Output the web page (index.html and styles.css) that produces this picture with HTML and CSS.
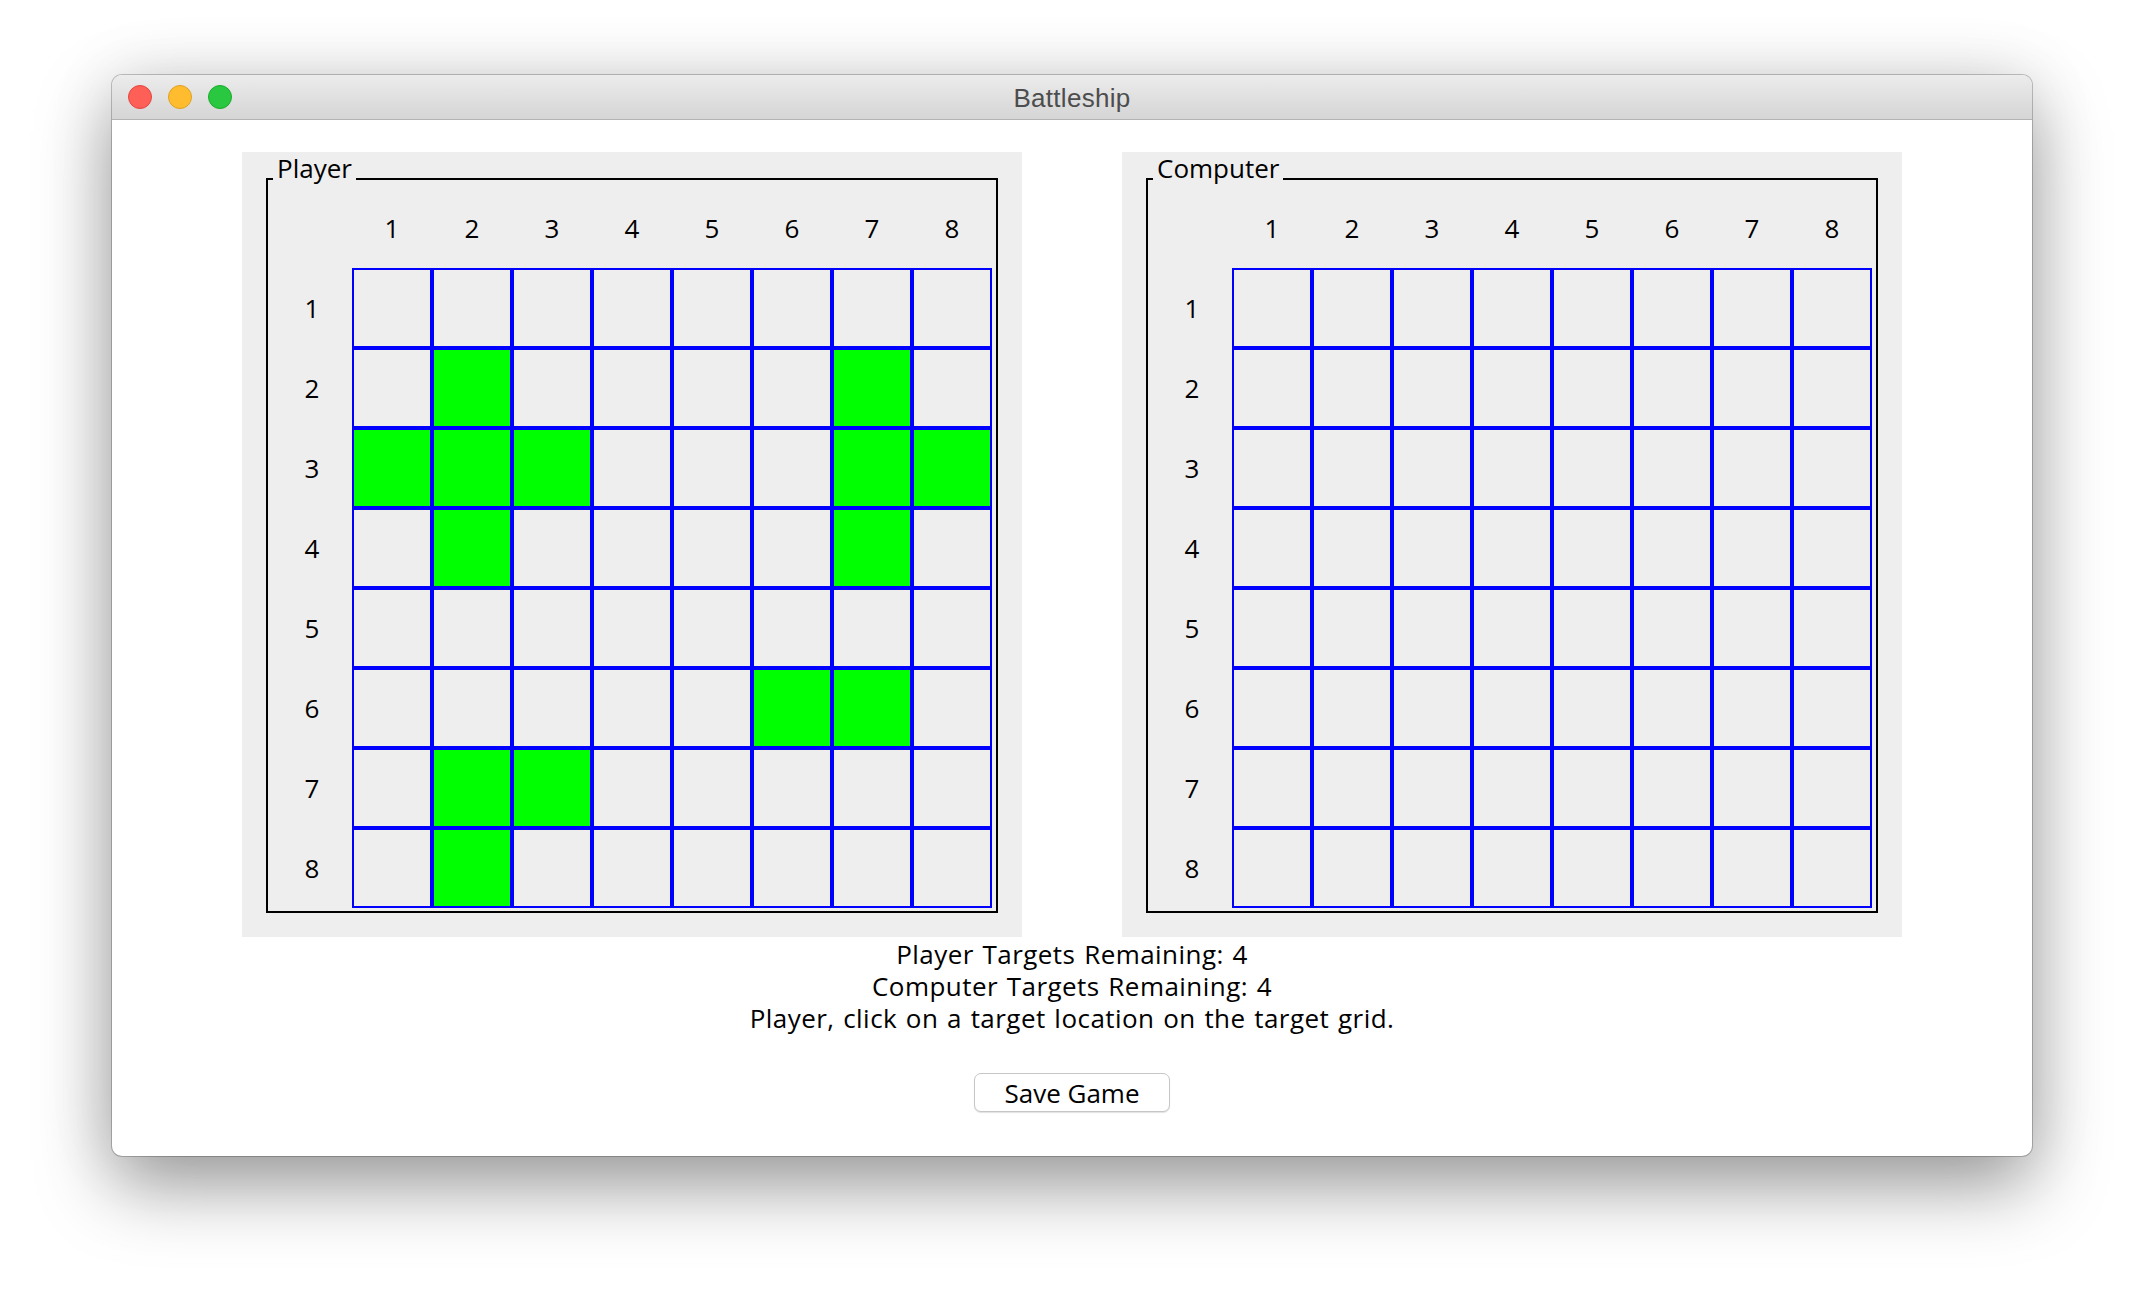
FILE: index.html
```html
<!DOCTYPE html>
<html>
<head>
<meta charset="utf-8">
<title>Battleship</title>
<link rel="stylesheet" href="styles.css">
</head>
<body>
<div class="window">
  <div class="titlebar">
    <div class="lights">
      <span class="light red"></span>
      <span class="light yellow"></span>
      <span class="light green"></span>
    </div>
    <div class="title">Battleship</div>
    <div></div>
  </div>
  <div class="content">
    <div class="boards">
      <section class="panel">
        <div class="titled">
          <span class="legend">Player</span>
          <div class="board">
            <div class="lbl"></div>
            <div class="lbl">1</div><div class="lbl">2</div><div class="lbl">3</div><div class="lbl">4</div><div class="lbl">5</div><div class="lbl">6</div><div class="lbl">7</div><div class="lbl">8</div>
            <div class="lbl">1</div>
            <div class="cell"></div><div class="cell"></div><div class="cell"></div><div class="cell"></div><div class="cell"></div><div class="cell"></div><div class="cell"></div><div class="cell"></div>
            <div class="lbl">2</div>
            <div class="cell"></div><div class="cell ship"></div><div class="cell"></div><div class="cell"></div><div class="cell"></div><div class="cell"></div><div class="cell ship"></div><div class="cell"></div>
            <div class="lbl">3</div>
            <div class="cell ship"></div><div class="cell ship"></div><div class="cell ship"></div><div class="cell"></div><div class="cell"></div><div class="cell"></div><div class="cell ship"></div><div class="cell ship"></div>
            <div class="lbl">4</div>
            <div class="cell"></div><div class="cell ship"></div><div class="cell"></div><div class="cell"></div><div class="cell"></div><div class="cell"></div><div class="cell ship"></div><div class="cell"></div>
            <div class="lbl">5</div>
            <div class="cell"></div><div class="cell"></div><div class="cell"></div><div class="cell"></div><div class="cell"></div><div class="cell"></div><div class="cell"></div><div class="cell"></div>
            <div class="lbl">6</div>
            <div class="cell"></div><div class="cell"></div><div class="cell"></div><div class="cell"></div><div class="cell"></div><div class="cell ship"></div><div class="cell ship"></div><div class="cell"></div>
            <div class="lbl">7</div>
            <div class="cell"></div><div class="cell ship"></div><div class="cell ship"></div><div class="cell"></div><div class="cell"></div><div class="cell"></div><div class="cell"></div><div class="cell"></div>
            <div class="lbl">8</div>
            <div class="cell"></div><div class="cell ship"></div><div class="cell"></div><div class="cell"></div><div class="cell"></div><div class="cell"></div><div class="cell"></div><div class="cell"></div>
          </div>
        </div>
      </section>
      <section class="panel">
        <div class="titled">
          <span class="legend">Computer</span>
          <div class="board">
            <div class="lbl"></div>
            <div class="lbl">1</div><div class="lbl">2</div><div class="lbl">3</div><div class="lbl">4</div><div class="lbl">5</div><div class="lbl">6</div><div class="lbl">7</div><div class="lbl">8</div>
            <div class="lbl">1</div>
            <div class="cell"></div><div class="cell"></div><div class="cell"></div><div class="cell"></div><div class="cell"></div><div class="cell"></div><div class="cell"></div><div class="cell"></div>
            <div class="lbl">2</div>
            <div class="cell"></div><div class="cell"></div><div class="cell"></div><div class="cell"></div><div class="cell"></div><div class="cell"></div><div class="cell"></div><div class="cell"></div>
            <div class="lbl">3</div>
            <div class="cell"></div><div class="cell"></div><div class="cell"></div><div class="cell"></div><div class="cell"></div><div class="cell"></div><div class="cell"></div><div class="cell"></div>
            <div class="lbl">4</div>
            <div class="cell"></div><div class="cell"></div><div class="cell"></div><div class="cell"></div><div class="cell"></div><div class="cell"></div><div class="cell"></div><div class="cell"></div>
            <div class="lbl">5</div>
            <div class="cell"></div><div class="cell"></div><div class="cell"></div><div class="cell"></div><div class="cell"></div><div class="cell"></div><div class="cell"></div><div class="cell"></div>
            <div class="lbl">6</div>
            <div class="cell"></div><div class="cell"></div><div class="cell"></div><div class="cell"></div><div class="cell"></div><div class="cell"></div><div class="cell"></div><div class="cell"></div>
            <div class="lbl">7</div>
            <div class="cell"></div><div class="cell"></div><div class="cell"></div><div class="cell"></div><div class="cell"></div><div class="cell"></div><div class="cell"></div><div class="cell"></div>
            <div class="lbl">8</div>
            <div class="cell"></div><div class="cell"></div><div class="cell"></div><div class="cell"></div><div class="cell"></div><div class="cell"></div><div class="cell"></div><div class="cell"></div>
          </div>
        </div>
      </section>
    </div>
    <div class="status">
      <div>Player Targets Remaining: 4</div>
      <div>Computer Targets Remaining: 4</div>
      <div>Player, click on a target location on the target grid.</div>
    </div>
    <button class="save" type="button">Save Game</button>
  </div>
</div>
</body>
</html>
```

FILE: styles.css
```css
* { box-sizing: border-box; }
html, body { margin: 0; background: #fff; }
body {
  min-height: 1304px;
  padding: 75px 112px;
  font-family: "Open Sans", "DejaVu Sans", sans-serif;
  color: #000;
}
.window {
  width: 1920px;
  height: 1081px;
  border-radius: 10px;
  background: #fff;
  box-shadow: 0 0 0 1px rgba(0,0,0,0.22), 0 30px 75px rgba(0,0,0,0.38), 0 0 70px rgba(0,0,0,0.09);
  overflow: hidden;
  display: flex;
  flex-direction: column;
}
.titlebar {
  flex: none;
  height: 45px;
  background: linear-gradient(#ececec, #d5d5d5);
  border-bottom: 1px solid #b3b3b3;
  display: grid;
  grid-template-columns: 1fr auto 1fr;
  align-items: center;
  padding: 0 16px;
}
.lights { display: flex; gap: 16px; }
.light { width: 24px; height: 24px; border-radius: 50%; border: 1px solid; }
.red { background: #fe5f57; border-color: #e2463f; }
.yellow { background: #febc2e; border-color: #dfa123; }
.green { background: #2ac840; border-color: #1aab29; }
.title {
  font-family: "Liberation Sans", Arial, sans-serif;
  font-size: 26px;
  color: #4d4d4d;
  letter-spacing: 0.3px;
  padding-top: 3px;
}
.content {
  flex: 1;
  display: flex;
  flex-direction: column;
  align-items: center;
  padding-top: 32px;
}
.boards { display: flex; gap: 100px; }
.panel { background: #eeeeee; padding: 26px 24px 24px; }
.titled {
  position: relative;
  border: 2px solid #000;
  padding: 8px 4px 3px 4px;
}
.legend {
  position: absolute;
  left: 5px;
  top: -28px;
  padding: 0 4px;
  background: #eeeeee;
  font-size: 26px;
  line-height: 32px;
}
.board {
  display: grid;
  grid-template-columns: repeat(9, 80px);
  grid-template-rows: repeat(9, 80px);
}
.lbl {
  display: flex;
  align-items: center;
  justify-content: center;
  font-size: 26px;
}
.cell { border: 2px solid #0000ff; background: #eeeeee; }
.cell.ship { background: #00ff00; }
.status {
  text-align: center;
  font-size: 26px;
  line-height: 32px;
  letter-spacing: 0.45px;
  word-spacing: 1.5px;
  padding-top: 1px;
}
.save {
  margin-top: 39px;
  width: 196px;
  height: 39px;
  border: 1px solid #c6c6c6;
  border-radius: 7px;
  background: #fff;
  box-shadow: 0 1px 1px rgba(0,0,0,0.12);
  font-family: "Open Sans", "DejaVu Sans", sans-serif;
  font-size: 26px;
  line-height: 1;
  color: #000;
  padding: 0;
}
```
